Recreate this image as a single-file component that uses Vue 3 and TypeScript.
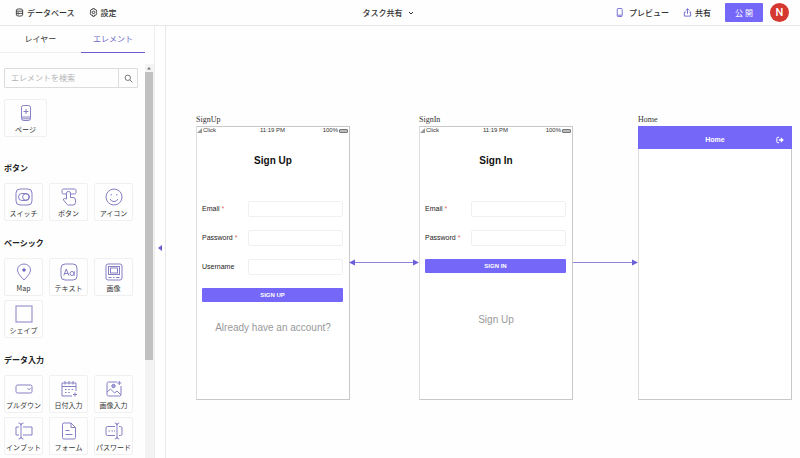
<script setup lang="ts">
import { ref } from 'vue'

interface Tool {
  label: string
  icon: string
}
interface Group {
  title: string
  tools: Tool[]
}
interface Board {
  name: string
  x: number
  title: string
  kind: 'form' | 'home'
  fields: { label: string; type: string; required: boolean }[]
  action: string
  link: string
}

const icons: Record<string, string> = {
  page: '<rect x="4.5" y="1.5" width="9" height="15" rx="2"/><path d="M9 5v5M6.500 7.500h5M5 13h8M5 14.800h8"/>',
  toggle: '<rect x="1" y="1" width="16" height="16" rx="4"/><rect x="3.500" y="5.500" width="11" height="7" rx="3.500"/><circle cx="10.800" cy="9" r="3.200"/>',
  button: '<path d="M6.500 6H3.500Q2 6 2 4.500v-2Q2 1 3.500 1h11Q16 1 16 2.500v2Q16 6 14.500 6H10.500"/><path d="M6.500 11V5q0-1.500 2-1.500t2 1.500v4.500h2.500q2.500 0 2.500 2.500v2.500Q15.500 17 13 17H8.500q-1 0-1.600-.8L3.500 12q-.5-1.300.8-1.500 1 0 2.200.5z"/>',
  smile: '<circle cx="9" cy="9" r="8"/><path d="M5 11q1.300 2.600 4 2.600t4-2.600"/><path d="M6.200 6v1.500M11.800 6v1.500"/>',
  map: '<path d="M9 17Q2.500 10.500 2.500 7a6.500 6 0 0 1 13 0Q15.500 10.500 9 17z"/><circle cx="9" cy="7" r="1.300" fill="#5148c0"/>',
  text: '<rect x="1" y="1" width="16" height="16" rx="4"/><path d="M3.800 12.500 6.300 6l2.500 6.500M4.700 10.500h3.300"/><circle cx="12" cy="10.500" r="2"/><path d="M14.200 8.300v4.400"/>',
  image: '<rect x="1" y="1" width="16" height="16" rx="2"/><rect x="3.500" y="3.500" width="11" height="8"/><rect x="5.500" y="5" width="7" height="5"/><path d="M3.500 14.500h3M8 14.500h1.500M11 14.500h3.500"/>',
  shape: '<rect x="1" y="1" width="16" height="16"/>',
  select: '<rect x="1" y="5" width="16" height="8" rx="1.500"/><path d="m12.500 8.200 1.500 1.600 1.500-1.600"/>',
  date: '<path d="M12 16H2V3h14v8M2 6.500h14M5 1v3.500M9 1v3.500M13 1v3.500"/><path d="M5 9.500h1.500M8.300 9.500h1.500M11.600 9.500h1.500M5 12.500h1.500M8.300 12.500h1.500M13 14.500h4M15 12.500v4"/>',
  photo: '<path d="M2 12V3.500Q2 2 3.500 2H12M16 6v8.500q0 1.500-1.500 1.500h-11Q2 16 2 14.500V12l3.500-3 4 4 2.500-2 4 4"/><circle cx="8.500" cy="6" r="1.700" fill="#a7a3df"/><path d="M14.300 1v4M12.300 3h4"/>',
  input: '<path d="M4 5H1v8h3M8 5h9v8H8M6 2v14M3.500 1Q6 1 6 3q0-2 2.500-2M3.500 17Q6 17 6 15q0 2 2.500 2"/>',
  form: '<path d="M11 1H4Q2.500 1 2.500 2.500v13Q2.500 17 4 17h10q1.500 0 1.500-1.500V5.500zM11 1v4.500h4.500M5.500 8.500h4M5.500 12.500h7"/>',
  password: '<path d="M10 4.500H2.500Q1 4.500 1 6v6q0 1.500 1.500 1.500H10M14 4.500h1.500Q17 4.500 17 6v6q0 1.500-1.500 1.500H14M12 2v14M9.800 1Q12 1 12 3q0-2 2.200-2M9.800 17Q12 17 12 15q0 2 2.200 2"/><path d="M3.500 9H5M6.500 9H8M9 9h1"/>',
}

const pageTool: Tool = { label: 'ページ', icon: 'page' }
const groups: Group[] = [
  {
    title: 'ボタン',
    tools: [
      { label: 'スイッチ', icon: 'toggle' },
      { label: 'ボタン', icon: 'button' },
      { label: 'アイコン', icon: 'smile' },
    ],
  },
  {
    title: 'ベーシック',
    tools: [
      { label: 'Map', icon: 'map' },
      { label: 'テキスト', icon: 'text' },
      { label: '画像', icon: 'image' },
      { label: 'シェイプ', icon: 'shape' },
    ],
  },
  {
    title: 'データ入力',
    tools: [
      { label: 'プルダウン', icon: 'select' },
      { label: '日付入力', icon: 'date' },
      { label: '画像入力', icon: 'photo' },
      { label: 'インプット', icon: 'input' },
      { label: 'フォーム', icon: 'form' },
      { label: 'パスワード', icon: 'password' },
    ],
  },
]

const email = { label: 'Email', type: 'email', required: true }
const password = { label: 'Password', type: 'password', required: true }
const boards: Board[] = [
  {
    name: 'SignUp', x: 30, title: 'Sign Up', kind: 'form',
    fields: [email, password, { label: 'Username', type: 'text', required: false }],
    action: 'SIGN UP', link: 'Already have an account?',
  },
  {
    name: 'SignIn', x: 253, title: 'Sign In', kind: 'form',
    fields: [email, password],
    action: 'SIGN IN', link: 'Sign Up',
  },
  { name: 'Home', x: 472, title: 'Home', kind: 'home', fields: [], action: '', link: '' },
]

const query = ref('')
const tab = ref<'layers' | 'elements'>('elements')
</script>

<template>
  <div class="app">
    <header class="topbar">
      <nav class="menu">
        <button class="item" type="button">
          <svg class="glyph" viewBox="0 0 10 10"><path d="M1.500 2.200Q1.500 1 5 1t3.500 1.200v5.600Q8.500 9 5 9T1.500 7.800zM1.500 3.500h7M1.500 6h7M3 4.800h1M3 7.400h1" /></svg>
          データベース
        </button>
        <button class="item" type="button">
          <svg class="glyph" viewBox="0 0 10 10"><path d="M4 .7h2l.4 1.200 1.200-.2 1 1.700-.8 1 .8 1.900-1 1.600-1.300-.1L5.800 9.300H4.200L3.700 7.800l-1.300.1-1-1.600.8-1.900-.8-1 1-1.700 1.200.2z" /><circle cx="5" cy="4.900" r="1.400" /></svg>
          設定
        </button>
      </nav>
      <button class="item project" type="button">
        タスク共有
        <svg class="chevron" viewBox="0 0 6 6"><path d="m1 2 2 2 2-2" /></svg>
      </button>
      <div class="actions">
        <button class="item preview" type="button">
          <svg class="glyph violet" viewBox="0 0 10 10"><rect x="2.500" y=".5" width="5.500" height="9" rx="1" /><path d="M3 8h4.500" /></svg>
          プレビュー
        </button>
        <button class="item share" type="button">
          <svg class="glyph violet" viewBox="0 0 10 10"><path d="M3 4.500H1.500V9h7V4.500H7M5 6.500V1M3 2.800 5 .8l2 2" /></svg>
          共有
        </button>
        <button class="publish" type="button">公 開</button>
        <button class="avatar" type="button">N</button>
      </div>
    </header>

    <div class="workspace">
      <aside class="sidebar">
        <div class="tabs" role="tablist">
          <button class="tab" :class="{ active: tab === 'layers' }" type="button" role="tab" @click="tab = 'layers'">レイヤー</button>
          <button class="tab" :class="{ active: tab === 'elements' }" type="button" role="tab" @click="tab = 'elements'">エレメント</button>
        </div>
        <div class="panel">
          <div class="library">
            <form class="search" @submit.prevent>
              <input v-model="query" type="search" placeholder="エレメントを検索" aria-label="エレメントを検索" />
              <button type="submit" aria-label="検索">
                <svg viewBox="0 0 10 10"><circle cx="4.200" cy="4.200" r="3" /><path d="m6.500 6.500 2.800 2.800" /></svg>
              </button>
            </form>
            <button class="tool page" type="button">
              <svg viewBox="0 0 18 18" v-html="icons[pageTool.icon]"></svg>
              <span>{{ pageTool.label }}</span>
            </button>
            <section v-for="group in groups" :key="group.title" class="group">
              <h2>{{ group.title }}</h2>
              <div class="tools">
                <button v-for="tool in group.tools" :key="tool.label" class="tool" type="button">
                  <svg viewBox="0 0 18 18" v-html="icons[tool.icon]"></svg>
                  <span>{{ tool.label }}</span>
                </button>
              </div>
            </section>
          </div>
          <div class="track">
            <svg viewBox="0 0 8 8"><path d="M2 5.500 4 3l2 2.500z" /></svg>
            <div class="thumb"></div>
          </div>
        </div>
      </aside>
      <button class="collapse" type="button" aria-label="サイドバーを閉じる">
        <svg viewBox="0 0 4 6"><path d="M4 0v6L0 3z" /></svg>
      </button>

      <main class="canvas">
        <article v-for="board in boards" :key="board.name" class="board" :style="{ left: board.x + 'px' }">
          <h3>{{ board.name }}</h3>
          <div class="screen">
            <template v-if="board.kind === 'form'">
              <div class="status">
                <span class="side"><svg viewBox="0 0 5 5"><path d="M0 5 5 0v5z" /></svg>Click</span>
                <span>11:19 PM</span>
                <span class="side end">100%<i class="battery"></i></span>
              </div>
              <h4>{{ board.title }}</h4>
              <form class="form" @submit.prevent>
                <label v-for="field in board.fields" :key="field.label" class="field">
                  <span>{{ field.label }} <em v-if="field.required">*</em></span>
                  <input :type="field.type" />
                </label>
                <button type="submit">{{ board.action }}</button>
              </form>
              <a class="link" :class="{ tall: board.fields.length < 3 }" href="#">{{ board.link }}</a>
            </template>
            <div v-else class="appbar">
              <strong>{{ board.title }}</strong>
              <button type="button" aria-label="ログアウト">
                <svg viewBox="0 0 8 8"><path d="M3 1.300H1.800Q.8 1.300.8 2.300v3.400q0 1 1 1H3" /><path class="solid" d="M2.800 3.200h2V1.300L7.800 4l-3 2.700V4.800h-2z" /></svg>
              </button>
            </div>
          </div>
        </article>
        <svg class="wires" width="480" height="10" viewBox="0 0 480 10">
          <path class="line" d="M188 5.500h60M407 5.500h60" />
          <path class="head" d="m183 5.500 6-3v6zM253 5.500l-6-3v6zM472 5.500l-6-3v6z" />
        </svg>
      </main>
    </div>
  </div>
</template>

<style>
body {
  margin: 0;
  background: #fff;
}
</style>

<style scoped>
* {
  box-sizing: border-box;
}
.app {
  display: flex;
  flex-direction: column;
  height: 100vh;
  overflow: hidden;
  background: #fefefe;
  color: #333;
  font: 8px/12px 'Noto Sans CJK JP', sans-serif;
}
button,
input {
  margin: 0;
  padding: 0;
  border: 0;
  background: none;
  color: inherit;
  font: inherit;
}
svg {
  flex: none;
  fill: none;
  stroke: currentColor;
}
.topbar {
  display: grid;
  grid-template-columns: 1fr auto 1fr;
  align-items: center;
  flex: none;
  height: 26px;
  padding: 0 11px 0 15px;
  border-bottom: 1px solid #e6e6e6;
}
.menu,
.actions,
.item {
  display: flex;
  align-items: center;
}
.menu {
  gap: 14px;
}
.item {
  gap: 3px;
  font-weight: 500;
  white-space: nowrap;
}
.project {
  gap: 5px;
  margin-right: 28px;
}
.glyph {
  width: 9px;
  height: 9px;
}
.violet {
  color: #6b62d0;
}
.chevron {
  width: 6px;
  height: 6px;
}
.actions {
  justify-content: flex-end;
  gap: 14px;
}
.preview {
  gap: 5px;
}
.publish {
  width: 38px;
  height: 19px;
  border-radius: 1px;
  background: #7568f8;
  color: #fff;
}
.avatar {
  width: 19px;
  height: 19px;
  margin-left: -7px;
  border-radius: 50%;
  background: #d5382f;
  color: #fff;
  font: 500 11px/19px Roboto, sans-serif;
}
.workspace {
  display: flex;
  flex: 1;
  min-height: 0;
}
.sidebar {
  display: flex;
  flex-direction: column;
  flex: none;
  width: 155px;
  border-right: 1px solid #eee;
}
.tabs {
  display: flex;
  flex: none;
  height: 27px;
  margin-right: 9px;
  border-bottom: 1px solid #f0f0f0;
}
.tab {
  flex: 1;
  height: 27px;
  border-bottom: 1px solid transparent;
}
.tab.active {
  flex: none;
  width: 64px;
  border-color: #6b5fd0;
  color: #7067c8;
}
.panel {
  display: flex;
  flex: 1;
  min-height: 0;
}
.library {
  flex: 1;
  padding: 15px 7px 0 4px;
  overflow-y: auto;
  scrollbar-width: none;
}
.search {
  display: flex;
  height: 20px;
  border: 1px solid #dcdcdc;
  border-radius: 1px;
}
.search input {
  flex: 1;
  min-width: 0;
  padding-left: 6px;
  appearance: none;
  outline: none;
}
.search input::placeholder {
  color: #b5b5b5;
}
.search button {
  display: grid;
  place-items: center;
  width: 19px;
  border-left: 1px solid #dcdcdc;
  color: #666;
}
.search button svg {
  width: 9px;
  height: 9px;
}
.tool {
  display: flex;
  flex-direction: column;
  align-items: center;
  gap: 1px;
  width: 39px;
  height: 38px;
  padding-top: 4px;
  border: 1px solid #f0f0f0;
  border-radius: 2px;
  font-size: 7px;
  line-height: 12px;
  white-space: nowrap;
}
.tool svg {
  width: 18px;
  height: 18px;
  color: #8580c4;
  stroke-width: 1;
}
.page {
  width: 43px;
  margin-top: 11px;
}
.group h2 {
  margin: 0;
  color: #222;
  font-size: 8px;
  font-weight: 700;
  line-height: 12px;
}
.group {
  padding-top: 25px;
}
.group + .group {
  padding-top: 16px;
}
.tools {
  display: flex;
  flex-wrap: wrap;
  gap: 4px 6px;
  margin-top: 9px;
}
.track {
  flex: none;
  width: 9px;
  margin-top: 11px;
  background: #f3f3f3;
}
.track svg {
  display: block;
  width: 8px;
  height: 8px;
  fill: #777;
  stroke: none;
}
.thumb {
  width: 8px;
  height: 73%;
  background: #c1c1c1;
}
.collapse {
  display: flex;
  align-items: center;
  flex: none;
  width: 11px;
  padding: 12px 0 0 3px;
  border-right: 1px solid #e8e8e8;
}
.collapse svg {
  width: 4px;
  height: 6px;
  fill: #6b5fd0;
  stroke: none;
}
.canvas {
  position: relative;
  flex: 1;
  overflow: hidden;
  font-family: 'Liberation Sans', sans-serif;
}
.board {
  position: absolute;
  top: 87px;
  width: 154px;
}
.board h3 {
  margin: 0;
  font: 8px/13px 'Liberation Serif', serif;
}
.screen {
  height: 274px;
  border: 1px solid #c8c8c8;
  border-left-color: #ddd;
  background: #fff;
}
.status {
  display: grid;
  grid-template-columns: 1fr auto 1fr;
  padding-right: 1px;
  font-size: 6px;
  line-height: 7px;
}
.side {
  display: flex;
  align-items: center;
  gap: 1px;
}
.side svg {
  width: 5px;
  height: 5px;
  fill: #999;
  stroke: none;
}
.end {
  justify-content: flex-end;
}
.battery {
  width: 9px;
  height: 4px;
  border: 1px solid #777;
  border-radius: 1px;
  background: #bbb;
}
.screen h4 {
  margin: 21px 0 34px;
  color: #111;
  font-size: 10px;
  line-height: 12px;
  text-align: center;
}
.form {
  display: flex;
  flex-direction: column;
  gap: 13px;
  padding: 0 6px 0 5px;
}
.field {
  display: flex;
  align-items: center;
  justify-content: space-between;
  color: #222;
  font-size: 7px;
}
.field em {
  color: #d66;
  font-style: normal;
}
.field input {
  width: 95px;
  height: 16px;
  padding: 0 4px;
  border: 1px solid #f0f0f0;
  border-radius: 2px;
}
.form button {
  height: 14px;
  border-radius: 1px;
  background: #7568f8;
  color: #fff;
  font-size: 6px;
  font-weight: 700;
}
.link {
  display: block;
  margin-top: 20px;
  color: #999;
  font-size: 10px;
  line-height: 12px;
  text-align: center;
  text-decoration: none;
}
.link.tall {
  margin-top: 41px;
}
.appbar {
  display: grid;
  grid-template-columns: 1fr auto 1fr;
  align-items: center;
  height: 23px;
  margin: -1px -1px 0;
  padding: 5px 8px 0;
  background: #7568f8;
  color: #fff;
  font-size: 7px;
}
.appbar strong {
  grid-column: 2;
}
.appbar button {
  justify-self: end;
  width: 8px;
  height: 8px;
}
.appbar svg {
  display: block;
  width: 8px;
  height: 8px;
}
.solid {
  fill: currentColor;
  stroke: none;
}
.wires {
  position: absolute;
  top: 231px;
  left: 0;
  pointer-events: none;
}
.line {
  stroke: #8a82dc;
}
.head {
  fill: #6b5fd8;
  stroke: none;
}
</style>
